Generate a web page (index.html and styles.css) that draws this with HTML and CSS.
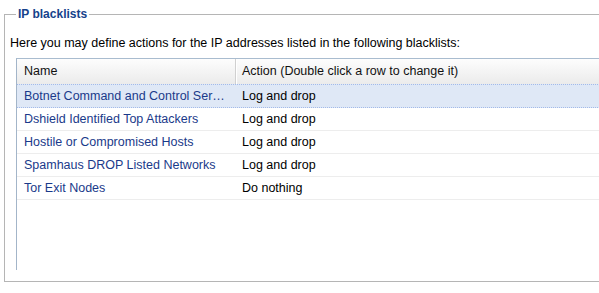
FILE: index.html
```html
<!DOCTYPE html>
<html lang="en">
<head>
    <meta charset="UTF-8">
    <title>IP blacklists</title>
    <link rel="stylesheet" href="styles.css">
</head>
<body>
    <fieldset class="panel">
        <legend>IP blacklists</legend>
        <p class="intro">Here you may define actions for the IP addresses listed in the following blacklists:</p>
        <div class="grid">
            <div class="grid-head">
                <div class="col-name">Name</div>
                <div class="col-action">Action (Double click a row to change it)</div>
            </div>
            <div class="row selected">
                <div class="col-name">Botnet Command and Control Servers</div>
                <div class="col-action">Log and drop</div>
            </div>
            <div class="row">
                <div class="col-name">Dshield Identified Top Attackers</div>
                <div class="col-action">Log and drop</div>
            </div>
            <div class="row">
                <div class="col-name">Hostile or Compromised Hosts</div>
                <div class="col-action">Log and drop</div>
            </div>
            <div class="row">
                <div class="col-name">Spamhaus DROP Listed Networks</div>
                <div class="col-action">Log and drop</div>
            </div>
            <div class="row">
                <div class="col-name">Tor Exit Nodes</div>
                <div class="col-action">Do nothing</div>
            </div>
        </div>
    </fieldset>
</body>
</html>
```

FILE: styles.css
```css
body {
    margin: 0;
    font-family: "Liberation Sans", Arial, sans-serif;
    font-size: 12.5px;
    background: #fff;
    color: #000;
    overflow: hidden;
}
.panel {
    margin: 7px -30px 0 4px;
    padding: 0 0 11px 5px;
    border: 1px solid #b5b5b5;
    min-width: 0;
}
.panel legend {
    margin-left: 6px;
    padding: 0 2px;
    font-size: 12px;
    line-height: 14px;
    font-weight: bold;
    color: #15428b;
}
.intro {
    margin: 15px 0 0;
    line-height: 14px;
}
.grid {
    margin: 8px 0 0 6px;
    height: 211px;
    border-top: 1px solid #a9bccf;
    border-left: 1px solid #a3b5c9;
}
.grid-head {
    display: flex;
    height: 25px;
    line-height: 25px;
    background: linear-gradient(#fdfdfd, #ebebeb);
    color: #111;
}
.col-name {
    box-sizing: border-box;
    width: 219px;
    padding: 0 5px 0 7px;
    white-space: nowrap;
    overflow: hidden;
    text-overflow: ellipsis;
}
.grid-head .col-name {
    border-right: 1px solid #d0d0d0;
    box-shadow: 1px 0 0 #fff;
}
.col-action {
    flex: 1;
    padding-left: 6px;
    white-space: nowrap;
}
.row {
    display: flex;
    height: 22px;
    line-height: 22px;
    border-bottom: 1px solid #ededed;
}
.row .col-name {
    color: #1a3a8a;
}
.row.selected {
    background: #dfe8f6;
    border-top: 1px dotted #a3bae9;
    border-bottom: 1px dotted #a3bae9;
}
```
